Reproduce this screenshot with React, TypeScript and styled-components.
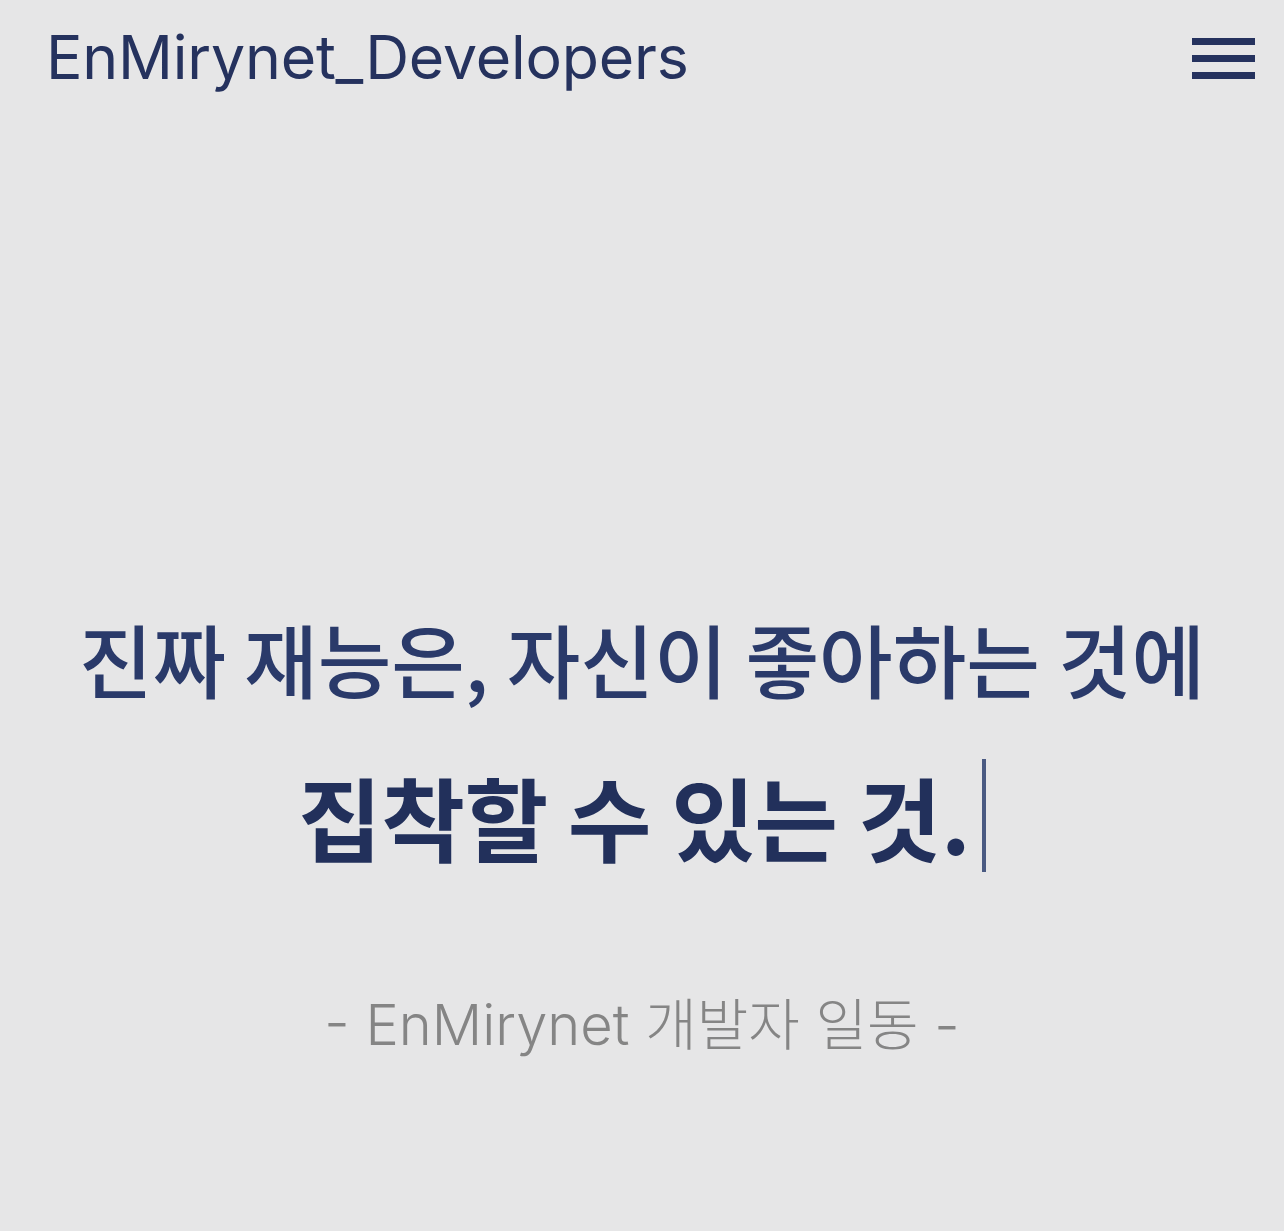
import React from "react";
import styled, { createGlobalStyle } from "styled-components";

const Global = createGlobalStyle`
  html, body { margin: 0; padding: 0; background: #e6e6e7; }
  body { font-family: Inter, "Noto Sans CJK KR", sans-serif; }
`;

const Page = styled.div`
  min-height: 1231px;
  background: #e6e6e7;
  display: flex;
  flex-direction: column;
`;

const Header = styled.header`
  height: 118px;
  display: flex;
  align-items: flex-start;
  justify-content: space-between;
  padding: 22px 29px 0 46px;
  box-sizing: border-box;
`;

const Logo = styled.div`
  font-family: Inter, "Noto Sans", sans-serif;
  font-size: 60.8px;
  font-weight: 400;
  color: #25325e;
  line-height: 70px;
  letter-spacing: -0.2px;
`;

const MenuButton = styled.button`
  width: 63px;
  display: flex;
  flex-direction: column;
  gap: 10px;
  padding: 0;
  margin-top: 16px;
  border: none;
  background: transparent;
`;

const Bar = styled.span`
  display: block;
  height: 7px;
  width: 100%;
  background: #25325e;
`;

const Hero = styled.main`
  display: flex;
  flex-direction: column;
  align-items: center;
  padding-top: 489px;
`;

const Line = styled.div<{ $bold?: boolean }>`
  font-family: "Noto Sans CJK KR", sans-serif;
  font-size: ${(p) => (p.$bold ? "91px" : "80px")};
  font-weight: ${(p) => (p.$bold ? 700 : 500)};
  color: ${(p) => (p.$bold ? "#22305b" : "#2a3a6a")};
  line-height: ${(p) => (p.$bold ? "136px" : "100px")};
  letter-spacing: ${(p) => (p.$bold ? "-0.5px" : "0px")};
  margin-top: ${(p) => (p.$bold ? "40px" : "0")};
  display: flex;
  align-items: center;
`;

const Cursor = styled.span`
  display: inline-block;
  width: 4px;
  height: 113px;
  background: #4a5a82;
  margin-left: 12px;
`;

const Credit = styled.div`
  margin-top: 107px;
  font-family: Inter, "Noto Sans CJK KR", sans-serif;
  font-size: 56px;
  font-weight: 300;
  color: #858585;
  line-height: 70px;
`;

export default function App() {
  return (
    <Page>
      <Global />
      <Header>
        <Logo>EnMirynet_Developers</Logo>
        <MenuButton aria-label="menu">
          <Bar />
          <Bar />
          <Bar />
        </MenuButton>
      </Header>
      <Hero>
        <Line>진짜 재능은, 자신이 좋아하는 것에</Line>
        <Line $bold>
          집착할 수 있는 것.
          <Cursor />
        </Line>
        <Credit>- EnMirynet 개발자 일동 -</Credit>
      </Hero>
    </Page>
  );
}
